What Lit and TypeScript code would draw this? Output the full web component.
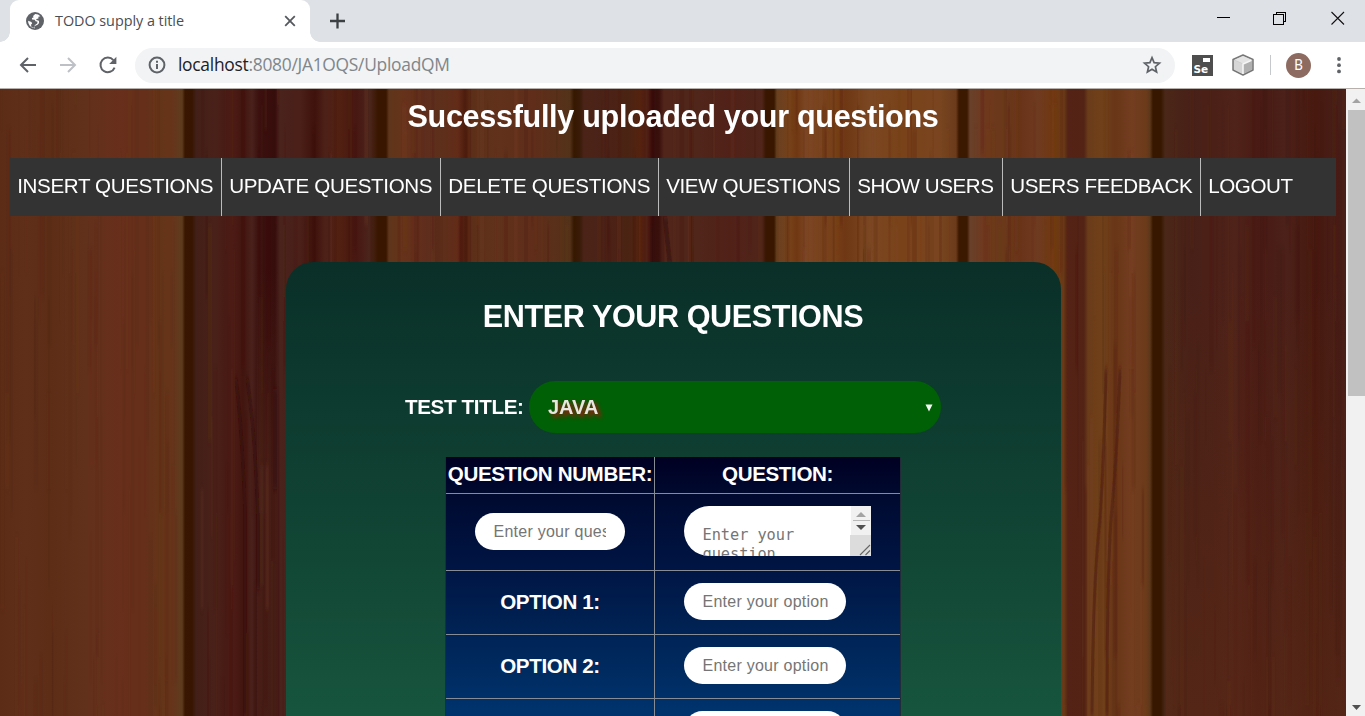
import { LitElement, html, css, svg } from "lit";
import { customElement } from "lit/decorators.js";

// Base tone of the panelling: [x, colour] along the width of the page.
const TONES: [number, string][] = [
  [0, "#5c2c16"], [25, "#602f1a"], [50, "#5d2d16"], [85, "#62311b"], [120, "#682f1b"], [145, "#652f1a"], [158, "#643418"], [172, "#66341a"],
  [180, "#5f3b1e"], [182, "#5f3b1e"], [185, "#391600"], [192, "#381500"], [196, "#421f18"], [215, "#4a2119"], [226, "#481b14"], [233, "#4d1b15"],
  [243, "#42150f"], [252, "#4a211b"], [259, "#3b100e"], [275, "#370d0c"], [280, "#4a231d"], [300, "#4a2018"], [315, "#3f120b"], [325, "#4d2118"],
  [340, "#522011"], [356, "#471711"], [370, "#4b251b"], [378, "#391600"], [386, "#391600"], [389, "#5e361b"], [404, "#67321a"], [425, "#602d1d"],
  [440, "#5d301b"], [458, "#622b18"], [465, "#4e1c0d"], [472, "#5c2f19"], [500, "#61311b"], [535, "#5f2d1a"], [562, "#573119"], [570, "#533219"],
  [574, "#361700"], [580, "#3a1b09"], [584, "#4b2418"], [610, "#4c2116"], [628, "#4a2413"], [640, "#55220f"], [649, "#4b1a12"], [652, "#370e0b"],
  [659, "#3a100c"], [664, "#52251a"], [700, "#50251a"], [730, "#512118"], [762, "#50251a"], [766, "#381600"], [774, "#381600"], [777, "#694120"],
  [790, "#764019"], [797, "#703812"], [805, "#7b4523"], [835, "#774018"], [845, "#6f3714"], [870, "#7b4722"], [900, "#794219"], [940, "#794520"],
  [956, "#6b3b1b"], [959, "#3b1800"], [967, "#3b1800"], [970, "#69412a"], [985, "#6f381d"], [1005, "#6a381c"], [1020, "#693318"], [1038, "#6e3a20"],
  [1053, "#713810"], [1064, "#693a18"], [1068, "#542216"], [1084, "#532315"], [1088, "#6b3c1a"], [1102, "#704019"], [1115, "#693618"], [1132, "#733d20"],
  [1146, "#6c3b1a"], [1150, "#5b3719"], [1153, "#381700"], [1161, "#381700"], [1165, "#4a2718"], [1190, "#492017"], [1215, "#4b2017"],
  [1235, "#50231a"], [1258, "#481a13"], [1285, "#4b2119"], [1315, "#47190f"], [1346, "#48201a"],
];

// Fine vertical grain, laid out with a small seeded generator.
function grain() {
  let seed = 41;
  const rnd = () => (seed = (seed * 16807) % 2147483647) / 2147483647;
  const joints = [[180, 196], [375, 389], [569, 583], [764, 776], [956, 970], [1149, 1164]];
  const out: { x: number; y: number; w: number; h: number; c: string; o: number }[] = [];
  for (let i = 0; i < 760; i++) {
    const x = rnd() * 1346;
    const y = Math.floor(rnd() * 30) * 24 - 80;
    const h = (3 + Math.floor(rnd() * 12)) * 24;
    const w = 1 + rnd() * 4;
    const k = rnd();
    const o = rnd();
    if (joints.some(([a, b]) => x + w > a && x < b)) continue;
    const calm = x < 180 ? 0.28 : x > 1164 ? 0.36 : 0.7;
    out.push({ x, y, w, h, c: k < 0.55 ? "#3d1204" : k < 0.8 ? "#85482c" : "#664020", o: (0.06 + o * 0.17) * calm });
  }
  return out;
}
const GRAIN = grain();

@customElement("wood-panel")
class WoodPanel extends LitElement {
  static styles = css`
    :host { display: block; overflow: hidden; }
    svg { display: block; }
  `;
  render() {
    return html`<svg width="1346" height="627" viewBox="0 0 1346 627">
      <defs>
        <linearGradient id="tone" gradientUnits="userSpaceOnUse" x1="0" x2="1346" y1="0" y2="0">
          ${TONES.map(([x, c]) => svg`<stop offset=${x / 1346} stop-color=${c}></stop>`)}
        </linearGradient>
        <linearGradient id="low" x1="0" x2="0" y1="0" y2="1"><stop offset=".3" stop-color="#5a2a16" stop-opacity="0"></stop><stop offset="1" stop-color="#5a2a16" stop-opacity=".6"></stop></linearGradient>
        <linearGradient id="fade" x1="0" x2="0" y1="0" y2="1"><stop offset="0" stop-color="#4a2118" stop-opacity="0"></stop><stop offset=".5" stop-color="#4a2118" stop-opacity=".8"></stop></linearGradient>
        <filter id="soft" x="0" y="0" width="1" height="1"><feGaussianBlur stdDeviation="0.7 3"></feGaussianBlur></filter>
      </defs>
      <rect width="1346" height="627" fill="url(#tone)"></rect>
      <rect x="1166" width="180" height="627" fill="url(#low)"></rect>
      <rect x="257" y="180" width="21" height="447" fill="url(#fade)"></rect>
      <g filter="url(#soft)">
        ${GRAIN.map((g) => svg`<rect x=${g.x} y=${g.y} width=${g.w} height=${g.h} fill=${g.c} opacity=${g.o}></rect>`)}
        <g fill="none" stroke="#38100a" stroke-opacity=".65">
          <path stroke-width="3" d="M236 290Q242 340 245 420V627M247 290Q255 340 258 430V500"></path>
          <path stroke-width="4" d="M275 300V400M665 128Q667 150 670 175"></path>
          <path stroke-width="3" stroke="#51210f" d="M1106 280Q1104 370 1100 430Q1093 490 1092 627M1120 280Q1117 370 1111 430Q1107 490 1107 627"></path>
        </g>
      </g>
    </svg>`;
  }
}

@customElement("browser-bar")
class BrowserBar extends LitElement {
  static styles = css`
    :host { display: block; font-family: "Open Sans", "Noto Sans", sans-serif; }
    svg { display: block; flex: none; }
    .strip { display: flex; height: 42px; background: #dee1e6; align-items: flex-end; }
    .foot { width: 10px; height: 10px; flex: none; }
    .foot.l { background: radial-gradient(circle at 0 0, #dee1e6 9.5px, #fff 10px); }
    .foot.r { background: radial-gradient(circle at 100% 0, #dee1e6 9.5px, #fff 10px); }
    .tab { width: 300px; height: 42px; box-sizing: border-box; background: #fff; border-radius: 9px 9px 0 0; display: flex; align-items: center; padding: 0 13px 0 16px; }
    .title { flex: 1; margin: -2px 0 0 11px; font-size: 14.4px; letter-spacing: -0.04px; color: #4a4d51; white-space: nowrap; font-weight: 400; }
    .plus { margin: 0 0 13px 10px; }
    .win { margin-left: auto; display: flex; align-self: flex-start; gap: 42px; padding: 11px 20px 0 0; }
    .min { margin-right: 1px; }
    .max { margin-right: 2px; }
    .bar { display: flex; height: 46px; background: #fff; align-items: center; border-bottom: 1px solid #b7afab; padding-left: 19px; box-sizing: content-box; }
    .nav { display: flex; gap: 22px; }
    .omni { display: flex; align-items: center; width: 1040px; height: 35px; margin-left: 18px; border-radius: 18px; background: #f1f3f4; box-sizing: border-box; padding: 0 13px 0 13px; }
    .url { flex: 1; margin: -2px 0 0 12px; font-size: 17.4px; letter-spacing: -0.27px; color: #80868b; white-space: nowrap; }
    .host { color: #202124; }
    .ext { display: flex; align-items: center; margin-left: 17px; }
    .cube { margin-left: 19px; }
    .rule { width: 1px; height: 20px; background: #c6c9cc; margin-left: 16px; }
    .avatar { width: 25px; height: 25px; border-radius: 50%; background: #8d6b60; color: #fff; font: 14px/25px Roboto, sans-serif; text-align: center; margin-left: 15px; }
    .dots { margin-left: 26px; }
  `;
  render() {
    return html`
      <div class="strip">
        <div class="foot l"></div>
        <div class="tab">
          <svg width="18" height="18" viewBox="0 0 18 18"><circle cx="9" cy="9" r="9" fill="#5f6368"></circle><path fill="#fff" d="M9.2 2.1 7.1 3.9 7.5 5.4 5.9 6.1 6.1 7.5 8.7 7.7 9.6 9.3 11.5 9.8 11.2 11.6 8.7 13.3 8.4 15.9 5.3 14.8 5.1 12.4 6.2 11.4 5.4 9.9 2.1 8.8A7 7 0 0 0 8.4 16.3L9 16.3 8.7 13.9 11.6 12.8 13.1 10.9 12.9 8.8 10.2 8 10.5 6.9 12.4 6.5 12.4 4.8 14.4 4.2A7.2 7.2 0 0 0 9.2 2.1Z"></path></svg>
          <span class="title">TODO supply a title</span>
          <svg width="14" height="14" viewBox="0 0 14 14" stroke="#55595e" stroke-width="1.8"><path d="M2.2 2.2 11.8 11.8M11.8 2.2 2.2 11.8"></path></svg>
        </div>
        <div class="foot r"></div>
        <svg class="plus" width="16" height="16" viewBox="0 0 16 16" stroke="#3c4043" stroke-width="2.3"><path d="M7.5.5V15.5M0 8H15"></path></svg>
        <div class="win">
          <svg class="min" width="13" height="13" viewBox="0 0 13 13" shape-rendering="crispEdges"><path d="M0 6.5H13" stroke="#000"></path></svg>
          <svg class="max" width="14" height="14" viewBox="0 0 14 14" fill="none" stroke="#000" shape-rendering="crispEdges"><path d="M.5 3.5H10.5V13.5H.5ZM3.5 3V1.5H12.5V10.5H11"></path></svg>
          <svg width="14" height="14" viewBox="0 0 14 14" stroke="#111" stroke-width="1.1"><path d="M.5 1 13 13.5M13 1 .5 13.5"></path></svg>
        </div>
      </div>
      <div class="bar">
        <div class="nav">
          <svg width="18" height="18" viewBox="0 0 18 18" fill="none" stroke="#5f6368" stroke-width="2"><path d="M17 9H2.5M9 2 2 9 9 16"></path></svg>
          <svg width="18" height="18" viewBox="0 0 18 18" fill="none" stroke="#bdc1c6" stroke-width="2"><path d="M1 9H15.5M9 2 16 9 9 16"></path></svg>
          <svg width="18" height="18" viewBox="0 0 18 18" fill="none"><path stroke="#5f6368" stroke-width="2" d="M15.6 11.6A7.3 7.3 0 1 1 14.4 4.2"></path><path fill="#5f6368" d="M17.4.8V8H10.2Z"></path></svg>
        </div>
        <div class="omni">
          <svg width="18" height="18" viewBox="0 0 18 18" fill="none" stroke="#5f6368" stroke-width="2"><circle cx="9" cy="9" r="7.4"></circle><path d="M9 8V13M9 4.8V6.8"></path></svg>
          <span class="url"><span class="host">localhost</span>:8080/JA1OQS/UploadQM</span>
          <svg width="20" height="20" viewBox="0 0 20 20" fill="none" stroke="#5f6368" stroke-width="1.7"><path d="M10 2.6 12.1 7.6 17.5 8.1 13.4 11.7 14.6 17 10 14.2 5.4 17 6.6 11.7 2.5 8.1 7.9 7.6Z"></path></svg>
        </div>
        <div class="ext">
          <svg width="21" height="21" viewBox="0 0 21 21"><rect width="21" height="21" fill="#4e4e4e"></rect><rect x="11" y="3" width="7" height="4" fill="#fff"></rect><text x="1.5" y="17.8" fill="#fff" font-family="DejaVu Sans" font-weight="bold" font-size="10.5">Se</text></svg>
          <svg class="cube" width="22" height="22" viewBox="0 0 22 22" stroke-linejoin="round"><path fill="#c9c9c9" stroke="#777" stroke-width="1.5" d="M11 1 21 5.5V16L11 21 1 16V5.5Z"></path><path fill="#e4e4e4" d="M11 2 19.5 5.8 11 9.6 2.5 5.8Z"></path><path fill="#b0b0b0" d="M11 10 20 6V15.5L11 20Z"></path><path fill="#d6d6d6" d="M2 6.3 10.8 10V20L2 15.6Z"></path><path stroke="#f6f6f6" stroke-width="1.6" d="M11 20V10L19.5 6.2" fill="none"></path></svg>
          <div class="rule"></div>
          <div class="avatar">B</div>
          <svg class="dots" width="4" height="18" viewBox="0 0 4 18" fill="#5f6368"><circle cx="2" cy="3" r="1.9"></circle><circle cx="2" cy="9.2" r="1.9"></circle><circle cx="2" cy="15.4" r="1.9"></circle></svg>
        </div>
      </div>`;
  }
}

// Label, cell width and tracking for each entry of the menu.
const MENU: [string, number, number][] = [
  ["INSERT QUESTIONS", 212, -0.37],
  ["UPDATE QUESTIONS", 219, -0.38],
  ["DELETE QUESTIONS", 218, -0.33],
  ["VIEW QUESTIONS", 191, -0.4],
  ["SHOW USERS", 153, -0.44],
  ["USERS FEEDBACK", 198, -0.4],
  ["LOGOUT", 100, -0.42],
];

@customElement("app-root")
class AppRoot extends LitElement {
  static styles = css`
    :host { display: flex; flex-direction: column; width: 1365px; height: 716px; overflow: hidden; font-family: "Liberation Sans", Arial, sans-serif; }
    .view { display: flex; height: 627px; }
    .stack { display: grid; grid-template: 627px / 1346px; overflow: hidden; }
    .stack > * { grid-area: 1 / 1; min-width: 0; }
    .page { display: flex; flex-direction: column; align-items: center; color: #fff; z-index: 1; height: 627px; overflow: hidden; }
    h1, h2 { margin: 0; font-size: 30.6px; line-height: 34px; white-space: nowrap; }
    h1 { margin-top: 10px; letter-spacing: -0.32px; }
    .menu { display: flex; width: 1326px; height: 58px; margin-top: 25px; background: #333; flex: none; }
    .item { box-sizing: border-box; padding-left: 7.2px; line-height: 56px; font-size: 20.6px; white-space: nowrap; border-right: 1px solid #bbb; }
    .item:last-child { border-right: 0; }
    .card { width: 775px; height: 900px; flex: none; margin-top: 46px; border-radius: 27px 27px 0 0; background: linear-gradient(#0a2f28, #0d3a2f 130px, #114534 280px, #17553e 454px, #206b4a); display: flex; flex-direction: column; align-items: center; }
    h2 { margin-top: 37px; letter-spacing: -0.42px; }
    .pick { display: flex; align-items: center; margin-top: 48px; gap: 5px; width: 536px; }
    .label { font-weight: bold; font-size: 20.6px; letter-spacing: -0.35px; width: 119px; white-space: nowrap; }
    .select { display: flex; align-items: center; box-sizing: border-box; width: 412px; height: 52px; padding: 0 8px 0 19px; border-radius: 26px; background: #006005; color: #e9e6e0; font-size: 20px; font-weight: bold; text-shadow: 3px 3px 4px #b01010; justify-content: space-between; }
    .arrow { margin-top: 1px; }
    .table { display: grid; box-sizing: border-box; width: 456px; margin: 24px 1px 0 0; grid-template-columns: 209px 245px; grid-template-rows: 36px 76px 63px 63px 63px; row-gap: 1px; border-left: 1px solid #222c38; border-right: 1px solid #222c38; background: linear-gradient(#000022, #000a30 40px, #001544 112px, #002152 165px, #003068 240px, #003a78); }
    .cell { display: flex; align-items: center; justify-content: center; font-size: 20.6px; letter-spacing: -0.38px; font-weight: bold; box-shadow: 0 1px #868b94; white-space: nowrap; min-width: 0; box-sizing: border-box; padding: 0 0 2px 1px; }
    .cell.a { border-right: 1px solid #868b94; }
    .cell.a.field { padding-left: 0; }
    .cell.b.field { justify-content: flex-start; padding-left: 29px; }
    .input { box-sizing: border-box; width: 162px; height: 37px; border-radius: 18.5px; background: #fff; padding: 0 15px 0 19px; font: 16px/37px "Liberation Sans", Arial, sans-serif; letter-spacing: 0.25px; color: #757575; }
    .input.num { width: 150px; padding: 0 19px 0 19px; }
    .clip { overflow: hidden; }
    .area { display: flex; width: 187px; height: 50px; border-radius: 25px 0 0 25px; background: #fff; overflow: hidden; margin-bottom: 1px; }
    .mono { flex: 1; padding: 20px 0 0 19px; font: 15.3px/19px "DejaVu Sans Mono", monospace; letter-spacing: -0.05px; color: #757575; white-space: pre; height: 40px; }
    svg { display: block; flex: none; }
  `;

  private option(n: number) {
    return html`<div class="cell a">OPTION ${n}:</div>
      <div class="cell b field"><div class="input"><div class="clip">Enter your option</div></div></div>`;
  }

  render() {
    return html`
      <browser-bar></browser-bar>
      <div class="view">
        <div class="stack">
          <wood-panel></wood-panel>
          <div class="page">
            <h1>Sucessfully uploaded your questions</h1>
            <div class="menu">
              ${MENU.map(([t, w, s]) => html`<div class="item" style="width:${w}px;letter-spacing:${s}px">${t}</div>`)}
            </div>
            <div class="card">
              <h2>ENTER YOUR QUESTIONS</h2>
              <div class="pick">
                <span class="label">TEST TITLE:</span>
                <div class="select"><span>JAVA</span><svg class="arrow" width="8" height="8" viewBox="0 0 8 8"><path fill="#f4f8f4" d="M.5.5H7.5L4 7.5Z"></path></svg></div>
              </div>
              <div class="table">
                <div class="cell a">QUESTION NUMBER:</div>
                <div class="cell b">QUESTION:</div>
                <div class="cell a field"><div class="input num"><div class="clip">Enter your question number</div></div></div>
                <div class="cell b field">
                  <div class="area">
                    <div class="mono">Enter your
question</div>
                    <svg width="21" height="50" viewBox="0 0 21 50">
                      <rect width="21" height="29" x="1" fill="#f1f1f1"></rect><rect y="29" width="21" height="21" fill="#dcdcdc"></rect>
                      <path fill="#a3a3a3" d="M6 11H16L11 6Z"></path><path stroke="#b9b9b9" d="M3 14.5H20"></path><path fill="#505050" d="M6 19H16L11 24Z"></path>
                      <path stroke="#666" stroke-width="1.1" d="M10 49 20 39M15.5 49 20 44.5"></path>
                    </svg>
                  </div>
                </div>
                ${[1, 2, 3].map((n) => this.option(n))}
              </div>
            </div>
          </div>
        </div>
        <svg width="19" height="627" viewBox="0 0 19 627">
          <rect width="19" height="627" fill="#f1f1f1"></rect><rect x="2" y="21" width="17" height="286" fill="#c1c1c1"></rect>
          <path fill="#a3a3a3" d="M6 14H15L10.5 9.5Z"></path><path fill="#505050" d="M6 616H15L10.5 621Z"></path>
        </svg>
      </div>`;
  }
}
